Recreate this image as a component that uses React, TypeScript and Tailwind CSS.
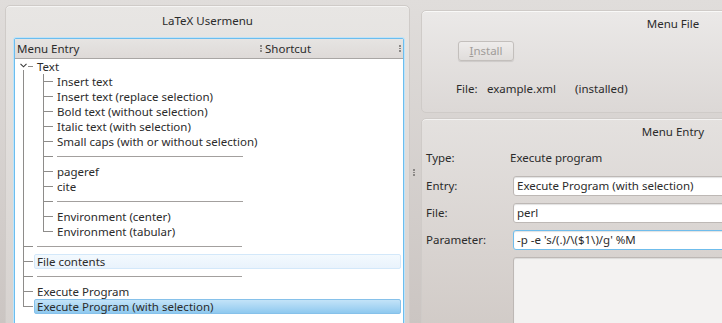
import type { ReactNode } from 'react'

type Row = {
  level: 0 | 1
  label?: string // no label means separator
  last?: boolean
  expand?: boolean
  state?: 'hover' | 'sel'
}

const rows: Row[] = [
  { level: 0, label: 'Text', expand: true },
  { level: 1, label: 'Insert text' },
  { level: 1, label: 'Insert text (replace selection)' },
  { level: 1, label: 'Bold text (without selection)' },
  { level: 1, label: 'Italic text (with selection)' },
  { level: 1, label: 'Small caps (with or without selection)' },
  { level: 1 },
  { level: 1, label: 'pageref' },
  { level: 1, label: 'cite' },
  { level: 1 },
  { level: 1, label: 'Environment (center)' },
  { level: 1, label: 'Environment (tabular)', last: true },
  { level: 0 },
  { level: 0, label: 'File contents', state: 'hover' },
  { level: 0 },
  { level: 0, label: 'Execute Program' },
  { level: 0, label: 'Execute Program (with selection)', state: 'sel', last: true },
]

const font = { fontFamily: '"Noto Sans", "Open Sans", sans-serif' }

// one 20px indentation column of the tree with its branch lines
function Branch({ full, half, tee, chevron }: { full?: boolean; half?: boolean; tee?: boolean; chevron?: boolean }) {
  return (
    <div className="relative w-[20px] h-full shrink-0">
      {full && <div className="absolute left-[8px] top-0 bottom-0 w-px bg-[#8e8c8a]" />}
      {half && <div className="absolute left-[8px] top-0 h-[8px] w-px bg-[#8e8c8a]" />}
      {chevron && <div className="absolute left-[8px] top-[11px] bottom-0 w-px bg-[#8e8c8a]" />}
      {tee && <div className="absolute left-[8px] top-[7px] w-[10px] h-px bg-[#8e8c8a]" />}
      {chevron && (
        <>
          <svg className="absolute left-[5px] top-[4px]" width="7" height="5" viewBox="0 0 7 5">
            <path d="M0.5 0.8 L3.5 3.8 L6.5 0.8" fill="none" stroke="#3a3a3a" strokeWidth="1.1" />
          </svg>
          <div className="absolute left-[13px] top-[7px] w-[5px] h-px bg-[#8e8c8a]" />
        </>
      )}
    </div>
  )
}

function TreeRow({ row }: { row: Row }) {
  const lvl0 = row.level === 0
  let label: ReactNode
  if (!row.label) {
    label = (
      <div className="flex-1 flex items-center">
        <div className={`h-px bg-[#a3a09e] ${lvl0 ? 'w-[205px] ml-[2px]' : 'w-[186px] ml-[2px]'}`} />
      </div>
    )
  } else {
    const bg =
      row.state === 'sel'
        ? 'bg-gradient-to-b from-[#c3e3f8] to-[#8fc9ef] border border-[#86c1ea] rounded-[2px]'
        : row.state === 'hover'
          ? 'bg-gradient-to-b from-[#f3f9fe] to-[#e9f3fc] border border-[#d3e8fa] rounded-[2px]'
          : 'border border-transparent'
    label = (
      <div className={`flex-1 flex items-center ml-[-1px] mr-[2px] pl-[2px] h-full ${bg}`}>
        <span className="leading-none whitespace-nowrap">{row.label}</span>
      </div>
    )
  }

  return (
    <div className="flex h-[15px]">
      {lvl0 ? (
        row.expand ? (
          <Branch chevron />
        ) : (
          <Branch full={!row.last} half={row.last} tee />
        )
      ) : (
        <>
          <Branch full />
          <Branch full={!row.last} half={row.last} tee />
        </>
      )}
      {label}
    </div>
  )
}

function Dots() {
  return (
    <div className="flex flex-col gap-[1px] w-[2px]">
      <div className="w-[1.5px] h-[1.5px] bg-[#8a8785]" />
      <div className="w-[1.5px] h-[1.5px] bg-[#8a8785]" />
      <div className="w-[1.5px] h-[1.5px] bg-[#8a8785]" />
    </div>
  )
}

function Field({ value, focus }: { value: string; focus?: boolean }) {
  return (
    <div
      className={`h-[20px] w-[260px] bg-white rounded-[3px] flex items-center pl-[3px] border shadow-[inset_0_1px_1px_rgba(0,0,0,0.12)] ${
        focus ? 'border-[#6fbdec]' : 'border-[#bdb8b5]'
      }`}
    >
      <span className="whitespace-nowrap leading-none">{value}</span>
    </div>
  )
}

function FormRow({ label, children, mt }: { label: string; children: ReactNode; mt: string }) {
  return (
    <div className={`flex items-center h-[20px] ${mt}`}>
      <div className="w-[91px] pl-[4px] shrink-0">{label}</div>
      {children}
    </div>
  )
}

export default function App() {
  return (
    <div
      className="w-[722px] h-[323px] overflow-hidden flex text-[11.5px] text-[#2b2b2b] bg-gradient-to-b from-[#e0dddb] to-[#cbc5c2]"
      style={font}
    >
      {/* left: user menu tree */}
      <div className="w-[410px] shrink-0 pl-[5px] pt-[5px]">
        <div className="h-[340px] rounded-[5px] border border-[#cfcbc8] bg-gradient-to-b from-[#e8e6e4] to-[#d6d1ce] shadow-[inset_0_1px_0_rgba(255,255,255,0.6)]">
          <div className="h-[28px] flex items-center justify-center pt-[1px]">LaTeX Usermenu</div>
          <div className="ml-[8px] mr-[5px] mt-[4px] h-[300px] bg-white border border-[#6cbdee] rounded-[2px] shadow-[0_0_0_1px_#bfe3f8]">
            <div className="h-[20px] flex items-center border-b border-[#a9a6a4] bg-gradient-to-b from-[#e6e4e2] to-[#dedad8]">
              <div className="w-[245px] pl-[2px]">Menu Entry</div>
              <Dots />
              <div className="flex-1 pl-[3px]">Shortcut</div>
              <div className="mr-[2px]">
                <Dots />
              </div>
            </div>
            <div>
              {rows.map((r, i) => (
                <TreeRow key={i} row={r} />
              ))}
            </div>
          </div>
        </div>
      </div>

      {/* splitter */}
      <div className="w-[8px] shrink-0 flex items-center justify-center pt-[22px]">
        <Dots />
      </div>

      {/* right: menu file + entry */}
      <div className="flex-1 min-w-0 overflow-hidden pl-[3px] pt-[10px] flex flex-col gap-[5px]">
        <div className="w-[504px] h-[103px] shrink-0 rounded-[5px] border border-[#cfcbc8] bg-gradient-to-b from-[#ebe9e8] to-[#dcd8d6] shadow-[inset_0_1px_0_rgba(255,255,255,0.7)]">
          <div className="h-[24px] flex items-center justify-center pt-[2px]">Menu File</div>
          <div className="pl-[36px] mt-[6px]">
            <div className="w-[56px] h-[20px] rounded-[3px] border border-[#c3bfbc] bg-gradient-to-b from-[#eeeceb] to-[#e0dddb] shadow-[0_1px_1px_rgba(0,0,0,0.1)] flex items-center justify-center text-[#a09c99]">
              <span>
                <span className="underline">I</span>nstall
              </span>
            </div>
          </div>
          <div className="flex items-center pl-[34px] mt-[19px]">
            <span className="w-[31px]">File:</span>
            <span className="w-[88px]">example.xml</span>
            <span>(installed)</span>
          </div>
        </div>

        <div className="w-[504px] h-[260px] shrink-0 rounded-[5px] border border-[#cfcbc8] bg-gradient-to-b from-[#e4e1df] to-[#cdc6c2] shadow-[inset_0_1px_0_rgba(255,255,255,0.6)]">
          <div className="h-[24px] flex items-center justify-center pt-[1px]">Menu Entry</div>
          <div className="flex items-center h-[20px] mt-[5px]">
            <div className="w-[88px] pl-[4px] shrink-0">Type:</div>
            <span>Execute program</span>
          </div>
          <FormRow label="Entry:" mt="mt-[8px]">
            <Field value="Execute Program (with selection)" />
          </FormRow>
          <FormRow label="File:" mt="mt-[7px]">
            <Field value="perl" />
          </FormRow>
          <FormRow label="Parameter:" mt="mt-[7px]">
            <Field value="-p -e 's/(.)/\($1\)/g' %M" focus />
          </FormRow>
          <div className="ml-[91px] mt-[7px] w-[260px] h-[80px] bg-[#f3f2f1] rounded-[3px] border border-[#bdb8b5] shadow-[inset_0_1px_1px_rgba(0,0,0,0.1)]" />
        </div>
      </div>
    </div>
  )
}
